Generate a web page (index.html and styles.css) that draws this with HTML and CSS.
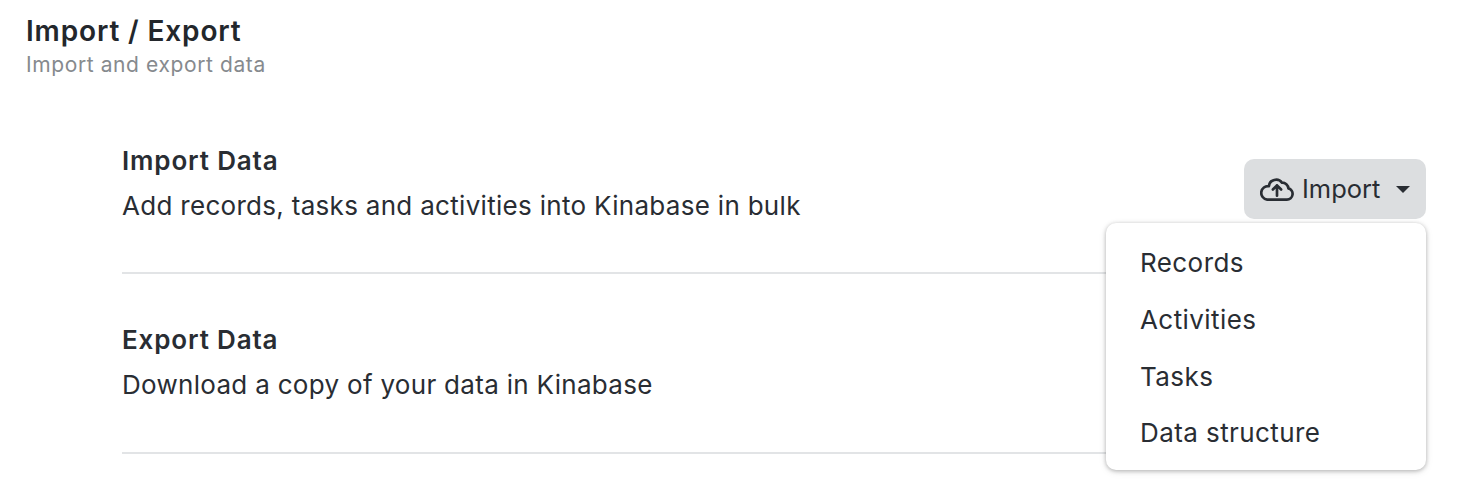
FILE: index.html
```html
<!DOCTYPE html>
<html lang="en">
<head>
<meta charset="utf-8">
<title>Import / Export</title>
<link rel="stylesheet" href="styles.css">
</head>
<body>
<header class="page-header">
  <h1 class="page-title">Import / Export</h1>
  <p class="page-subtitle">Import and export data</p>
</header>
<main class="sections">
  <section class="row">
    <div class="row-text">
      <h2 class="row-title">Import Data</h2>
      <p class="row-desc">Add records, tasks and activities into Kinabase in bulk</p>
    </div>
    <div class="dropdown">
      <button class="btn" type="button">
        <svg class="btn-icon" viewBox="0.6 -0.5 32.8 23" fill="none" stroke="currentColor" stroke-width="2.6" stroke-linecap="round" stroke-linejoin="round"><path d="M7.5 21.2H26.5A5.5 5.5 0 0 0 28 10.4A6 6 0 0 0 21.8 4.9A7 7 0 0 0 9.2 8.2A6.5 6.5 0 0 0 7.5 21.2Z"/><path d="M17 17.5V7.5M13 11.5l4-4 4 4"/></svg>
        <span class="btn-label">Import</span>
        <span class="caret"></span>
      </button>
      <ul class="menu">
        <li class="menu-item">Records</li>
        <li class="menu-item">Activities</li>
        <li class="menu-item">Tasks</li>
        <li class="menu-item">Data structure</li>
      </ul>
    </div>
  </section>
  <section class="row">
    <div class="row-text">
      <h2 class="row-title">Export Data</h2>
      <p class="row-desc">Download a copy of your data in Kinabase</p>
    </div>
  </section>
</main>
</body>
</html>
```
FILE: styles.css
```css
* { box-sizing: border-box; }
html, body { margin: 0; padding: 0; background: #fff; }
body {
  width: 1472px;
  height: 504px;
  overflow: hidden;
  font-family: Inter, "Liberation Sans", sans-serif;
  color: #292d33;
}
.page-header { padding: 12px 26px 0; }
.page-title { margin: 0; font-size: 28px; line-height: 38px; font-weight: 600; letter-spacing: .86px; color: #23272c; }
.page-subtitle { margin: 0; font-size: 21px; line-height: 29px; color: #868a8e; font-weight: 400; letter-spacing: .6px; }
.sections { padding: 65px 46px 0 122px; }
.row {
  display: flex;
  justify-content: space-between;
  height: 130px;
  margin-bottom: 49px;
  border-bottom: 2px solid #e2e4e6;
}
.row + .row { height: 131px; margin-bottom: 0; }
.row-title { margin: 0; font-size: 26px; line-height: 33px; font-weight: 600; letter-spacing: .85px; }
.row-desc { margin: 12px 0 0; font-size: 26px; line-height: 33px; font-weight: 400; letter-spacing: .3px; }
.dropdown { position: relative; margin-top: 15px; }
.btn {
  display: flex;
  align-items: center;
  width: 182px;
  height: 60px;
  padding: 0 16px 0 16px;
  border: 0;
  border-radius: 10px;
  background: #dcdee0;
  color: #292d33;
  font: 400 25.5px/33px Inter, "Liberation Sans", sans-serif;
}
.btn-icon { width: 34px; height: 24px; margin-right: 8px; flex: none; }
.btn-label { margin-top: -2px; }
.caret {
  margin-left: auto;
  width: 0;
  height: 0;
  border-left: 7px solid transparent;
  border-right: 7px solid transparent;
  border-top: 7px solid #292d33;
}
.menu {
  position: absolute;
  top: 64px;
  right: 0;
  width: 320px;
  height: 247px;
  margin: 0;
  padding: 11.5px 0;
  list-style: none;
  background: #fff;
  border-radius: 10px;
  box-shadow: 0 1px 4px rgba(0,0,0,.28), 0 2px 8px rgba(0,0,0,.08);
}
.menu-item { padding: 0 34px; height: 56.67px; display: flex; align-items: center; font-size: 26px; letter-spacing: .42px; }
```
